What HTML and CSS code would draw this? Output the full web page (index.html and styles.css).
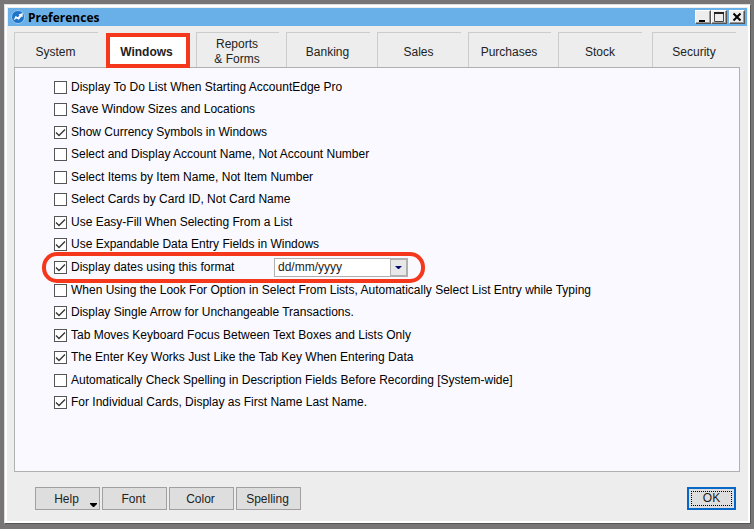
FILE: index.html
```html
<!DOCTYPE html>
<html lang="en">
<head>
<meta charset="utf-8">
<title>Preferences</title>
<link rel="stylesheet" href="styles.css">
</head>
<body>
<main class="window">
  <header class="titlebar">
    <svg class="app-icon" viewBox="0 0 14 14" aria-hidden="true"><circle cx="7" cy="7" r="6.5" fill="#1e73ca" stroke="#98c8f0"/><path d="M2.500 10.500 4.500 6l2.500 1.200 1.500-2-1-.7L11.800 3l-.3 4.200-1-.8-2.700 3.400-2.300-1.300z" fill="#fff"/></svg>
    <h1 class="title">Preferences</h1>
    <div class="window-controls">
      <button class="control" type="button" aria-label="Minimize"><svg viewBox="0 0 12 10"><path d="M2 8h6v2H2z"/></svg></button>
      <button class="control" type="button" aria-label="Maximize"><svg viewBox="0 0 12 10"><path d="M1.500 .5h9v9h-9z" fill="none" stroke="#444"/><path d="M1 0h10v2H1z" fill="#222"/></svg></button>
      <button class="control close" type="button" aria-label="Close"><svg viewBox="0 0 12 10"><path d="M2.500 1.500l7 7M9.500 1.500l-7 7" stroke="#000" stroke-width="2"/></svg></button>
    </div>
  </header>
  <nav class="tabs" role="tablist">
    <button class="tab" type="button" role="tab">System</button>
    <button class="tab selected" type="button" role="tab" aria-selected="true">Windows</button>
    <button class="tab" type="button" role="tab">Reports<br>&amp; Forms</button>
    <button class="tab" type="button" role="tab">Banking</button>
    <button class="tab" type="button" role="tab">Sales</button>
    <button class="tab" type="button" role="tab">Purchases</button>
    <button class="tab wide" type="button" role="tab">Stock</button>
    <button class="tab" type="button" role="tab">Security</button>
  </nav>
  <section class="panel">
    <div class="options">
      <div class="option"><label><input type="checkbox">Display To Do List When Starting AccountEdge Pro</label></div>
      <div class="option"><label><input type="checkbox">Save Window Sizes and Locations</label></div>
      <div class="option"><label><input type="checkbox" checked>Show Currency Symbols in Windows</label></div>
      <div class="option"><label><input type="checkbox">Select and Display Account Name, Not Account Number</label></div>
      <div class="option"><label><input type="checkbox">Select Items by Item Name, Not Item Number</label></div>
      <div class="option"><label><input type="checkbox">Select Cards by Card ID, Not Card Name</label></div>
      <div class="option"><label><input type="checkbox" checked>Use Easy-Fill When Selecting From a List</label></div>
      <div class="option"><label><input type="checkbox" checked>Use Expandable Data Entry Fields in Windows</label></div>
      <div class="option highlighted">
        <label class="date-label"><input type="checkbox" checked>Display dates using this format</label>
        <div class="dropdown"><select aria-label="Date format"><option>dd/mm/yyyy</option></select><span class="arrow"><svg viewBox="0 0 7 4"><path d="M0 0h7L4 3H3z"/></svg></span></div>
      </div>
      <div class="option"><label><input type="checkbox">When Using the Look For Option in Select From Lists, Automatically Select List Entry while Typing</label></div>
      <div class="option"><label><input type="checkbox" checked>Display Single Arrow for Unchangeable Transactions.</label></div>
      <div class="option"><label><input type="checkbox" checked>Tab Moves Keyboard Focus Between Text Boxes and Lists Only</label></div>
      <div class="option"><label><input type="checkbox" checked>The Enter Key Works Just Like the Tab Key When Entering Data</label></div>
      <div class="option"><label><input type="checkbox">Automatically Check Spelling in Description Fields Before Recording [System-wide]</label></div>
      <div class="option"><label><input type="checkbox" checked>For Individual Cards, Display as First Name Last Name.</label></div>
    </div>
  </section>
  <footer class="actions">
    <button class="action" type="button">Help<svg class="help-arrow" viewBox="0 0 7 4"><path d="M0 0h7v1L4 4H3L0 1z"/></svg></button>
    <button class="action" type="button">Font</button>
    <button class="action" type="button">Color</button>
    <button class="action" type="button">Spelling</button>
    <button class="ok" type="button"><span>OK</span></button>
  </footer>
</main>
</body>
</html>
```
FILE: styles.css
```css
*, *::before, *::after { box-sizing: border-box; }
body {
  margin: 0;
  padding: 4px 3px 5px 4px;
  min-height: 100vh;
  display: flex;
  background: #777575;
  font: 12px/15px "Liberation Sans", Arial, sans-serif;
  color: #000;
}
button, select { font: inherit; color: inherit; }
.window {
  flex: 1;
  display: flex;
  flex-direction: column;
  background: #ededed;
  border: 1px solid;
  border-color: #dedede #555 #555 #dedede;
  box-shadow: inset 0 0 0 2px #fff;
  padding: 3px;
}
.titlebar {
  height: 18px;
  display: flex;
  align-items: center;
  background: #6ab0e8;
  padding: 0 2px 0 3px;
}
.app-icon { width: 14px; height: 14px; }
.title {
  flex: 1;
  margin: 0 0 0 3px;
  font: bold 12px/18px "Open Sans", sans-serif;
  padding-top: 2px;
}
.window-controls { display: flex; }
.control {
  width: 16px;
  height: 14px;
  padding: 0;
  background: #ededed;
  border: 1px solid;
  border-color: #fff #555 #555 #fff;
  box-shadow: inset -1px -1px #999;
  display: grid;
  place-items: center;
}
.control svg { width: 12px; height: 10px; }
.close { margin-left: 2px; }
.tabs {
  position: relative;
  z-index: 1;
  height: 35px;
  margin: 6px 7px 0 6px;
  display: grid;
  grid-template-columns: 91fr 91fr 90fr 91fr 91fr 90fr 94fr 88fr;
}
.tab {
  position: relative;
  padding: 5px 9px 0 0;
  border: 0;
  border-left: 1px solid #ccc;
  background: linear-gradient(#ccc, #ccc) no-repeat 0 0 / calc(100% - 7px) 1px;
  color: #222;
}
.tab.wide { padding-right: 11px; background-size: calc(100% - 10px) 1px; }
.tab:last-child { padding-right: 5px; background-size: calc(100% - 4px) 1px; }
.tab.selected {
  border-left-color: transparent;
  background: none;
  font-weight: bold;
}
.tab.selected::before {
  content: "";
  position: absolute;
  z-index: -1;
  inset: 1px 6px -1px 0;
  border: 4px solid #f5371b;
  background: #fff;
}
.panel {
  flex: 1;
  margin: 0 7px 0 6px;
  padding: 8px 39px;
  border: 1px solid #b0b0b0;
  background: #faf9ff;
}
.options {
  min-height: 338px;
  display: grid;
  grid-auto-rows: 1fr;
}
.option { display: flex; align-items: center; position: relative; }
label { display: flex; align-items: center; gap: 4px; }
input[type="checkbox"] {
  appearance: none;
  width: 13px;
  height: 13px;
  margin: 0;
  border: 1px solid #555;
  background: #fff;
}
input[type="checkbox"]:checked {
  background: #fff url("data:image/svg+xml,%3Csvg xmlns='http://www.w3.org/2000/svg' viewBox='0 0 11 11'%3E%3Cpath d='M1 5.500 4 8.500 10 2.500' fill='none' stroke='%23333' stroke-width='1.300'/%3E%3C/svg%3E");
}
.highlighted::after {
  content: "";
  position: absolute;
  top: -4px;
  bottom: -4px;
  left: -12px;
  width: 383px;
  border: 4px solid #f5371b;
  border-radius: 15px;
  pointer-events: none;
}
.date-label { width: 220px; }
.dropdown {
  display: flex;
  width: 134px;
  height: 19px;
  border: 1px solid #b0b0b0;
  background: #fff;
  position: relative;
}
select {
  appearance: none;
  flex: 1;
  border: 0;
  background: none;
  padding: 0 3px;
  color: #222;
}
.arrow {
  position: absolute;
  inset: 0 0 0 auto;
  width: 17px;
  border: 1px solid #b0b0b0;
  background: #e8e8e8;
  display: grid;
  place-items: center;
  pointer-events: none;
}
.arrow svg { width: 7px; height: 4px; fill: #000a70; }
.actions {
  display: flex;
  align-items: center;
  gap: 2px;
  margin: 15px 11px 10px 27px;
}
.action {
  position: relative;
  width: 65px;
  height: 23px;
  padding: 2px 2px 0 0;
  border: 1px solid #a0a0a0;
  background: #dedede;
  color: #222;
}
.help-arrow { position: absolute; right: 2px; bottom: 2px; width: 7px; height: 4px; }
.ok {
  width: 49px;
  height: 23px;
  margin-left: auto;
  padding: 2px;
  border: 2px solid #0868ca;
  background: #dedede;
  color: #222;
}
.ok span { display: block; border: 1px dotted #000; line-height: 13px; }
```
